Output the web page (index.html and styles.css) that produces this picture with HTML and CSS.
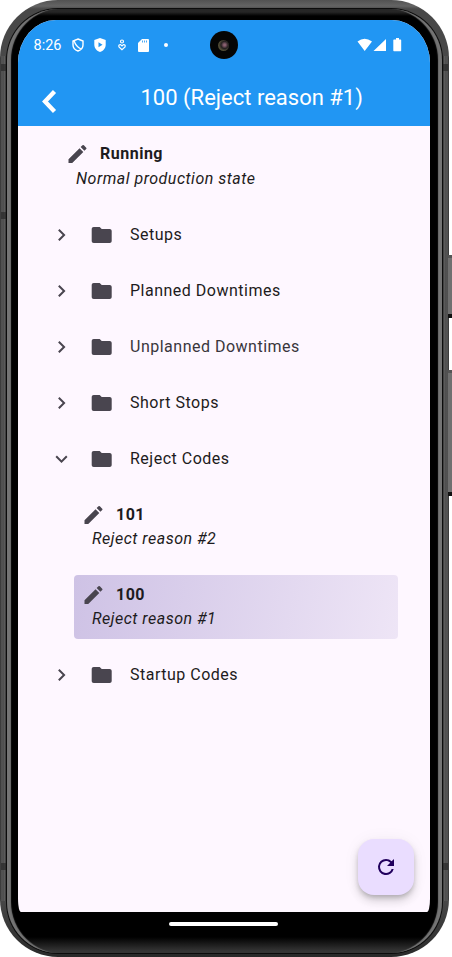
FILE: index.html
```html
<!DOCTYPE html>
<html lang="en">
<head>
<meta charset="utf-8">
<title>100 (Reject reason #1)</title>
<link rel="stylesheet" href="styles.css">
</head>
<body>
<svg class="defs" width="0" height="0" aria-hidden="true">
  <symbol id="pencil" viewBox="0.500 0 24 24"><path d="M3 17.25V21h3.75L17.81 9.94l-3.75-3.75L3 17.25zM20.71 7.04a1 1 0 0 0 0-1.41l-2.34-2.34a1 1 0 0 0-1.41 0l-1.83 1.83 3.75 3.75 1.83-1.83z"/></symbol>
  <symbol id="folder" viewBox="0.300 0 24 24"><path d="M10 4H4c-1.100 0-2 .9-2 2v12c0 1.100.9 2 2 2h16c1.100 0 2-.9 2-2V8c0-1.100-.9-2-2-2h-8l-2-2z"/></symbol>
  <symbol id="right" viewBox="0.500 0 24 24"><path d="M10 6 8.590 7.410 13.170 12l-4.580 4.590L10 18l6-6z"/></symbol>
  <symbol id="down" viewBox="0.500 0 24 24"><path d="M16.590 8.590 12 13.170 7.410 8.590 6 10l6 6 6-6z"/></symbol>
</svg>
<div class="device">
  <i class="key power"></i><i class="key volume"></i>
  <div class="frame"><div class="bezel">
    <div class="screen">
      <header>
        <div class="status">
          <span class="time">8:26</span>
          <svg class="s1" width="12" height="14" viewBox="0 0 12 14"><path d="M6 1 11 3v4c0 3-2 5-5 6-3-1-5-3-5-6V3zM2.200 2.800Q3.500 8 9 11" fill="none" stroke="#fff" stroke-width="1.400"/></svg>
          <svg class="s2" width="12" height="14" viewBox="0 0 12 14"><path d="M6 0 11.700 2v5c0 3-2.500 6-5.700 7C2.800 13 .3 10 .3 7V2z" fill="#fff"/><path d="M4.500 4.300v5L8.500 6.800z" fill="#2196f3"/></svg>
          <svg class="s3" width="8" height="12" viewBox="0 0 8 12" fill="none" stroke="#fff" stroke-width="1.200"><circle cx="4" cy="2.500" r="1.500"/><path d="M4 10.700 1 7.900Q.3 5.500 2.500 5.500L4 7l1.500-1.500Q7.700 5.500 7 7.900z"/></svg>
          <svg class="s4" width="11" height="13" viewBox="0 0 11 13"><path d="M4 0h6q1 0 1 1v11q0 1-1 1H1q-1 0-1-1V4z" fill="#fff"/><path d="M4.500 1.500v2M6.500 1.500v2M8.500 1.500v2" stroke="#2196f3" stroke-width=".8"/></svg>
          <i class="dot"></i>
          <svg class="signals" width="46" height="14" viewBox="0 0 46 14" fill="#fff"><path d="M.5 3.600Q7.500-2 15 3.600L7.700 13zM29 1v12H16.500zM37 1.500h2V0h3v1.500h1.500q.7 0 .7.700v10.300q0 .7-.7.700H37q-.7 0-.7-.7V2.200q0-.7.700-.7z"/></svg>
        </div>
        <div class="bar">
          <svg class="back" width="16" height="25" viewBox="0 0 16 25"><path d="M13.500 2.500 4 12.500 13.500 22.500" fill="none" stroke="#fff" stroke-width="4.300"/></svg>
          <h1>100 (Reject reason #1)</h1>
        </div>
      </header>
      <main>
        <div class="leaf root"><div class="name"><svg><use href="#pencil"/></svg><b>Running</b></div><em>Normal production state</em></div>
        <div class="row"><svg class="arrow"><use href="#right"/></svg><svg class="folder"><use href="#folder"/></svg><span>Setups</span></div>
        <div class="row"><svg class="arrow"><use href="#right"/></svg><svg class="folder"><use href="#folder"/></svg><span>Planned Downtimes</span></div>
        <div class="row faded"><svg class="arrow"><use href="#right"/></svg><svg class="folder"><use href="#folder"/></svg><span>Unplanned Downtimes</span></div>
        <div class="row"><svg class="arrow"><use href="#right"/></svg><svg class="folder"><use href="#folder"/></svg><span>Short Stops</span></div>
        <div class="row"><svg class="arrow"><use href="#down"/></svg><svg class="folder"><use href="#folder"/></svg><span>Reject Codes</span></div>
        <div class="group">
          <div class="leaf"><div class="name"><svg><use href="#pencil"/></svg><b>101</b></div><em>Reject reason #2</em></div>
          <div class="leaf selected"><div class="name"><svg><use href="#pencil"/></svg><b>100</b></div><em>Reject reason #1</em></div>
        </div>
        <div class="row"><svg class="arrow"><use href="#right"/></svg><svg class="folder"><use href="#folder"/></svg><span>Startup Codes</span></div>
      </main>
      <button class="refresh" aria-label="Refresh"><svg width="24" height="24" viewBox="0 0 24 24"><path d="M17.650 6.350A7.960 7.960 0 0 0 12 4a8 8 0 1 0 7.730 10h-2.080A6 6 0 1 1 12 6c1.660 0 3.140.69 4.220 1.780L13 11h7V4z" fill="#21005d"/></svg></button>
    </div>
    <div class="nav"><i></i></div>
  </div></div>
  <i class="seam upper"></i><i class="seam middle"></i><i class="seam lower"></i>
  <i class="seam upper end"></i><i class="seam lower end"></i>
  <div class="camera"><i></i></div>
</div>
</body>
</html>
```
FILE: styles.css
```css
* { box-sizing: border-box; }
body { margin: 0; background: #fff; font-family: Roboto, sans-serif; color: #1d1b20; }
.defs { position: absolute; }
.device { position: relative; width: 452px; height: 957px; padding-right: 3px; overflow: hidden; }
.frame {
  height: 957px; border-radius: 58px; padding: 9px 7px 4px;
  background:
    linear-gradient(90deg, #333 0, #5a5a5a 2px, #4a4a4a 3px, #606060 5px, #222 6px, transparent 8px, transparent 441px, #222 443px, #606060 444px, #4a4a4a 446px, #5a5a5a 447px, #333 449px) 0 56px / 100% 845px no-repeat,
    linear-gradient(#525252, #646464 6px, #484848 9px, #484848 900px, #292929);
}
.bezel {
  height: 944px; border-radius: 51px; padding: 11px 12px 0 11px;
  background: linear-gradient(#262626 0, #262626 3px, #000 7px, #000 928px, #353535 942px);
  box-shadow: 0 0 0 1px #0c0c0c, inset 5px 0 1px -1px #747474, inset -5px 0 1px -1px #747474;
}
.screen {
  position: relative; height: 891.500px; overflow: hidden;
  border-radius: 38px 38px 3px 3px / 43px 43px 13px 13px; background: #fef7ff;
}
header { height: 106px; background: #2196f3; color: #fff; }
.status { height: 50px; display: flex; align-items: center; padding: 0 27px 0 15.500px; }
.time { width: 38px; font-size: 14.500px; line-height: 20px; padding-top: 1px; }
.s2 { margin-left: 10px; }
.s3 { margin-left: 12px; }
.s4 { margin-left: 12px; }
.dot { width: 4px; height: 4px; border-radius: 50%; background: #fff; margin-left: 15px; }
.signals { margin-left: auto; }
.bar { height: 56px; display: flex; align-items: center; padding-left: 23px; }
.back { margin-top: 7px; }
h1 { margin: 0 0 0 83.500px; font-size: 22px; font-weight: 400; line-height: 28px; white-space: nowrap; }
main { padding: 8px 32px 0 28px; font-size: 16px; letter-spacing: .5px; }
.row { height: 56px; display: flex; align-items: center; }
.row span { margin-left: 16.500px; line-height: 24px; }
.faded span { color: #39363c; }
svg use { fill: #49454f; }
.arrow { width: 24px; height: 24px; margin: 0 16px 0 3.500px; }
.folder { width: 24px; height: 24px; }
.group { padding: 8px 0; }
.leaf { height: 64px; margin-left: 28px; padding: 8px; border-radius: 4px; }
.leaf + .leaf { margin-top: 16px; }
.leaf.root { margin: 0 0 8.500px 12px; }
.name { display: flex; align-items: center; height: 24px; }
.name svg { width: 24px; height: 24px; }
.name b { margin-left: 10px; line-height: 24px; }
.leaf em { display: block; margin-left: 10px; line-height: 24px; }
.root em { padding-top: .5px; }
.selected { background: linear-gradient(100deg, #cec2e5, #eee5f6); }
.refresh {
  position: absolute; right: 16.500px; bottom: 16.500px; width: 56px; height: 56px;
  border: 0; border-radius: 16px; background: #eaddff; padding: 0;
  display: grid; place-items: center;
  box-shadow: 0 3px 5px -1px #0003, 0 6px 10px #00000024, 0 1px 18px #0000000c;
}
.nav { height: 24px; display: flex; align-items: center; justify-content: center; padding-right: 2px; }
.nav i { width: 109px; height: 4px; border-radius: 2px; background: #fff; }
.camera {
  position: absolute; left: 209.500px; top: 31px; width: 28px; height: 28px;
  border-radius: 50%; background: #050505; display: grid; place-items: center;
}
.camera i { width: 11px; height: 11px; border-radius: 50%; background: radial-gradient(circle at 60% 45%, #8a6070 0 10%, #252020 40%, #555038 65%, #151515); }
.key { position: absolute; left: 448px; width: 4px; background: #707070; border-top: 3px solid #555; border-bottom: 4px solid #111; }
.power { top: 255px; height: 63px; }
.volume { top: 370px; height: 126px; }
.seam { position: absolute; left: 1px; width: 5px; height: 7px; background: #2229; }
.end { left: 443px; }
.upper { top: 64px; }
.middle { top: 212px; }
.lower { top: 863px; }
```
